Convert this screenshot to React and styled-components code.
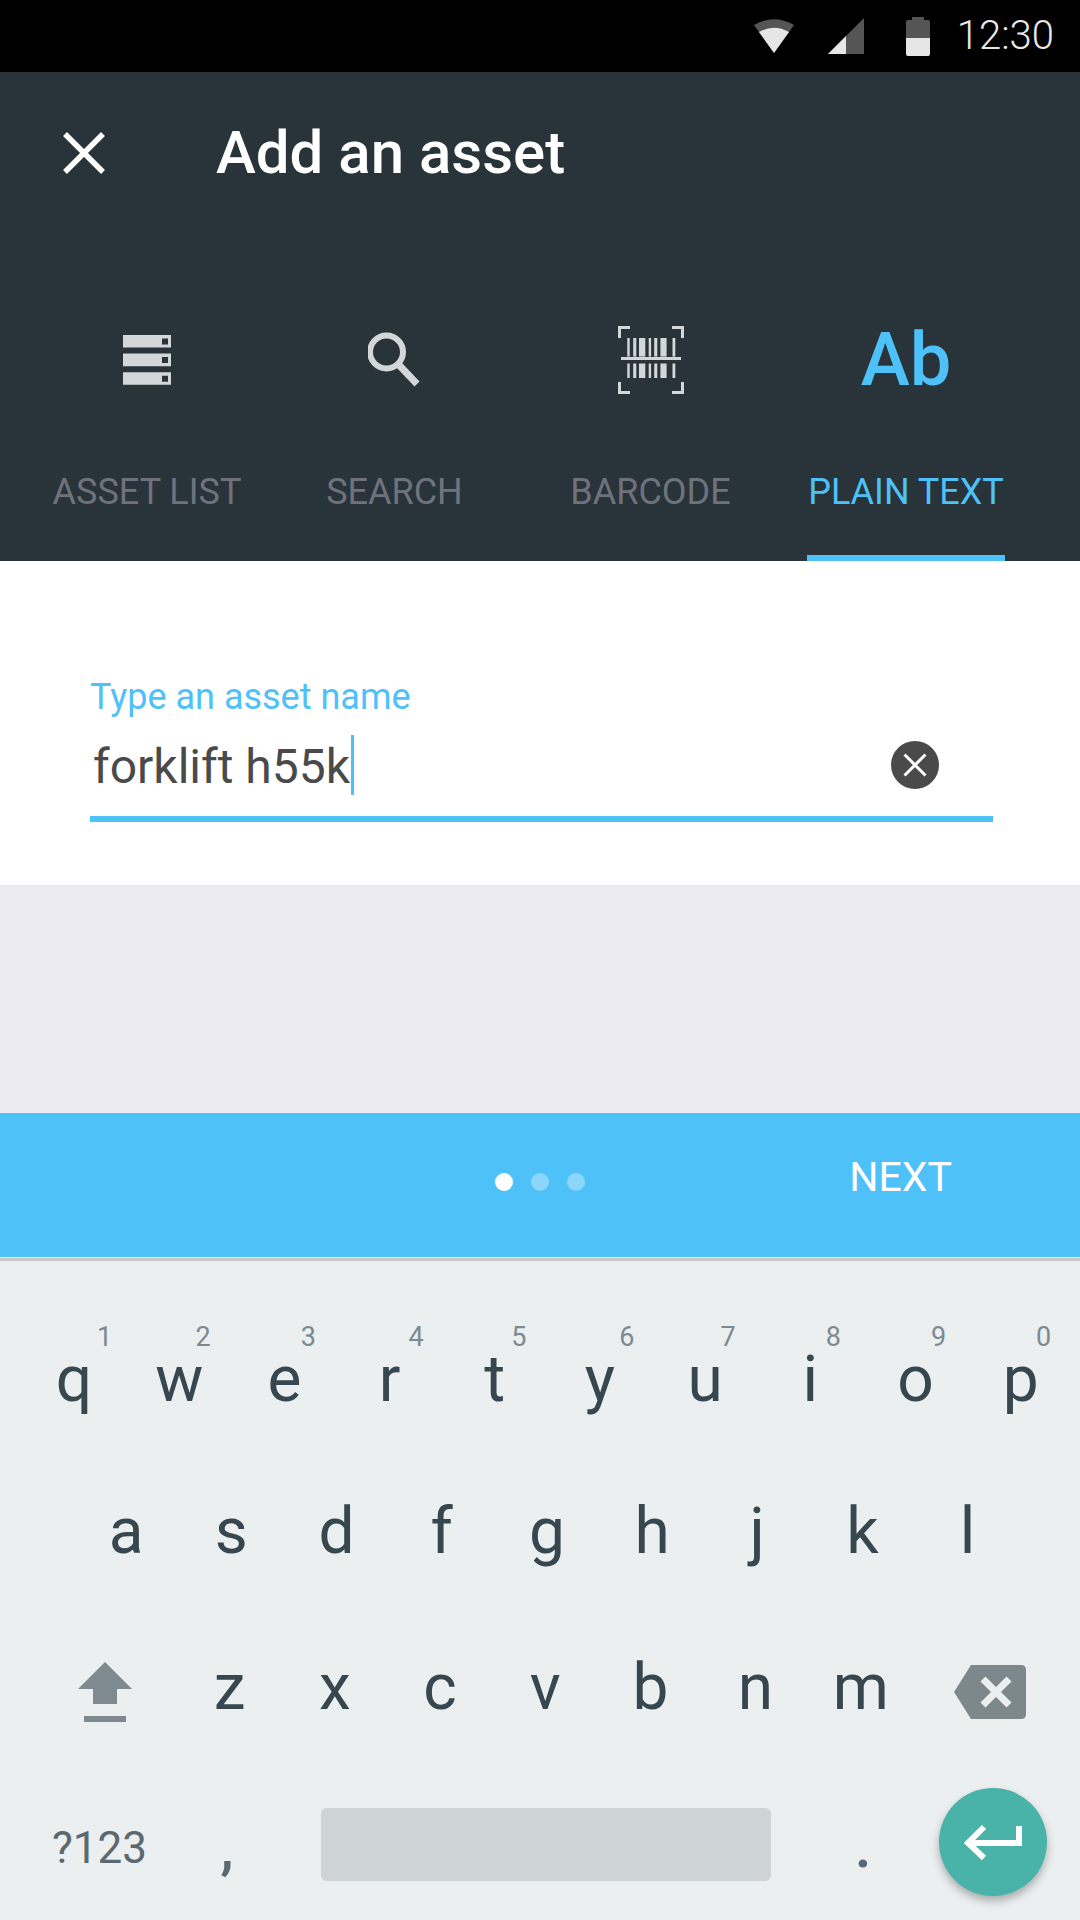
import React from "react";
import styled, { createGlobalStyle } from "styled-components";

const Global = createGlobalStyle`
  html, body { margin: 0; padding: 0; background: #ebeff0; }
  * { box-sizing: border-box; }
`;

const Page = styled.div`
  width: 1080px; height: 1920px; overflow: hidden; display: flex; flex-direction: column;
  font-family: Roboto, "Liberation Sans", sans-serif; background: #ebeff0;
`;
const StatusBar = styled.div`
  height: 72px; background: #000; display: flex; align-items: center; justify-content: flex-end; padding-right: 26px;
`;
const StatusIcon = styled.svg`
  display: block; flex: none; margin-right: ${p => p.$mr}px;
`;
const Clock = styled.span`
  font-size: 40px; font-weight: 300; color: #e8e8e8; line-height: 72px;
`;
const Header = styled.header`
  height: 489px; background: #29333a; display: flex; flex-direction: column;
`;
const TitleRow = styled.div`
  height: 162px; display: flex; align-items: center; padding-left: 62px; gap: 110px;
`;
const Title = styled.h1`
  margin: 0; font-size: 60px; font-weight: 500; color: #fff; line-height: 1;
`;
const Tabs = styled.div`
  flex: 1; display: grid; grid-template-columns: 294px 201px 311px 200px;
`;
const Tab = styled.div`
  display: flex; flex-direction: column; align-items: center;
`;
const IconSlot = styled.div`
  height: 68px; margin-top: 92px; display: flex; align-items: center; justify-content: center;
`;
const AbIcon = styled.span`
  font-size: 74px; font-weight: 500; color: #4fc1f9; line-height: 68px;
`;
const TabLabel = styled.div`
  margin-top: 74px; font-size: 36px; line-height: 48px; white-space: nowrap;
  color: ${p => (p.$active ? "#4fc1f9" : "#6f727d")};
`;
const TabUnderline = styled.div`
  margin-top: auto; width: 198px; height: 6px; background: ${p => (p.$active ? "#4fc1f9" : "transparent")};
`;
const FieldSection = styled.section`
  height: 324px; background: #fff; padding: 116px 87px 0 90px;
`;
const FieldLabel = styled.div`
  font-size: 36px; line-height: 40px; color: #4fc1f9;
`;
const InputRow = styled.div`
  margin-top: 18px; height: 87px; padding: 0 54px 21px 3px; border-bottom: 6px solid #4fc1f9;
  display: flex; align-items: center; justify-content: space-between;
`;
const Value = styled.div`
  font-size: 48px; line-height: 60px; color: #4a4a4a; display: flex; align-items: center;
`;
const ValueText = styled.span`
  padding-top: 3px;
`;
const Caret = styled.span`
  display: block; width: 3px; height: 60px; background: #4fc1f9; margin-left: 1px;
`;
const Spacer = styled.div`
  height: 228px; background: #ebebf1;
`;
const NextBar = styled.div`
  height: 144px; background: #4fc1f9; display: grid; grid-template-columns: 1fr auto 1fr; align-items: center;
`;
const Dots = styled.div`
  grid-column: 2; display: flex; gap: 18px; padding-bottom: 6px;
`;
const Dot = styled.span`
  width: 18px; height: 18px; border-radius: 50%; background: ${p => (p.$on ? "#fff" : "rgba(255,255,255,.35)")};
`;
const NextLabel = styled.span`
  grid-column: 3; justify-self: end; padding: 0 128px 17px 0; font-size: 41px; font-weight: 400; color: #fff; line-height: 48px;
`;
const Keyboard = styled.div`
  flex: 1; position: relative; border-top: 1px solid #fff; display: flex; flex-direction: column;
`;
const KeyboardEdge = styled.div`
  height: 3px; background: #c6c8c8; margin-bottom: 41px;
`;
const KeyRow = styled.div`
  height: 156px; display: flex; padding-left: ${p => p.$pl}px;
`;
const Key = styled.div`
  position: relative; width: 105.2px; flex: none; display: flex; align-items: center; justify-content: center;
  font-size: 64px; color: #37474f; padding-bottom: ${p => p.$pb}px; line-height: 1;
`;
const Hint = styled.span`
  position: absolute; top: 22px; right: ${p => p.$r}px; font-size: 27px; line-height: 1; color: #7d8a90;
`;
const ActionKey = styled.div`
  flex: none; width: ${p => p.$w}px; display: flex; align-items: center; justify-content: center;
`;
const BottomRow = styled.div`
  flex: 1; display: grid; grid-template-columns: 151px 104px 492px 184px; padding-left: 24px;
`;
const SymbolKey = styled.div`
  display: flex; align-items: center; justify-content: center; color: #5b6a72; line-height: 1;
  font-size: ${p => p.$size}px; padding-top: ${p => p.$pt || 0}px; font-weight: ${p => p.$fw || 400};
`;
const SpaceBar = styled.div`
  align-self: start; margin: 38px 0 0 42px; width: 450px; height: 73px; border-radius: 6px; background: #ced3d6;
`;
const Fab = styled.div`
  position: absolute; right: 33px; bottom: 24px; width: 108px; height: 108px; border-radius: 50%;
  background: #4ab3a9; box-shadow: 0 5px 9px rgba(0,0,0,.28); display: flex; align-items: center; justify-content: center;
`;

const grey = "#d3d7d9";
const ListIcon = () => (
  <svg width="48" height="50" viewBox="0 0 48 50">
    {[0, 18.6, 37.2].map(y => (
      <path key={y} fill={grey} fillRule="evenodd" d={`M0 ${y}h48v12.6H0z M39 ${y + 3.5}v6h6v-6z`} />
    ))}
  </svg>
);
const SearchIcon = () => (
  <svg width="54" height="56" viewBox="0 0 54 56" fill="none" stroke={grey}>
    <circle cx="18.5" cy="20" r="16.500" strokeWidth="6" />
    <path d="M31 33L49 52" strokeWidth="7" />
  </svg>
);
const BarcodeIcon = () => {
  const bars = [[9.3, 2.4], [15.2, 3.1], [21, 6.3], [30.7, 2.4], [36.2, 3.1], [42.4, 6.2], [54.5, 2.8]];
  return (
    <svg width="66" height="68" viewBox="0 0 66 68" fill={grey}>
      <path d="M0 12V0h12v3H3v9z M54 0h12v12h-3V3h-9z M0 56h3v9h9v3H0z M66 56v12H54v-3h9v-9z" />
      {bars.map(([x, w]) => (
        <React.Fragment key={x}>
          <rect x={x} y="12" width={w} height="18.6" />
          <rect x={x} y="37.5" width={w} height="14.5" />
        </React.Fragment>
      ))}
      <rect x="3" y="31" width="60" height="3" />
    </svg>
  );
};

const row1 = [["q", 1, 14.5], ["w", 2, 21], ["e", 3, 21], ["r", 4, 18.5], ["t", 5, 21], ["y", 6, 18], ["u", 7, 22], ["i", 8, 22], ["o", 9, 22], ["p", 0, 22]];

export default function App() {
  const tabs = [
    { label: "ASSET LIST", icon: <ListIcon /> },
    { label: "SEARCH", icon: <SearchIcon /> },
    { label: "BARCODE", icon: <BarcodeIcon /> },
    { label: "PLAIN TEXT", icon: <AbIcon>Ab</AbIcon>, active: true },
  ];
  return (
    <Page>
      <Global />
      <StatusBar>
        <StatusIcon $mr={34} width="40" height="36" viewBox="0 0 40 36">
          <path fill="#555" d="M0 7Q20 -4.500 40 7L20 35z" />
          <path fill="#e6e6e6" d="M5 14Q20 5.500 35 14L20 35z" />
        </StatusIcon>
        <StatusIcon $mr={42} width="36" height="36" viewBox="0 0 36 36">
          <path fill="#555" d="M36 0V36H0z" />
          <path fill="#e6e6e6" d="M18 18V36H0z" />
        </StatusIcon>
        <StatusIcon $mr={27} width="24" height="39" viewBox="0 0 24 39">
          <path fill="#555" d="M6 0h12v3h4q2 0 2 2v16H0V5q0-2 2-2h4z" />
          <path fill="#e6e6e6" d="M0 21h24v16q0 2-2 2H2q-2 0-2-2z" />
        </StatusIcon>
        <Clock>12:30</Clock>
      </StatusBar>
      <Header>
        <TitleRow>
          <svg width="44" height="44" viewBox="0 0 44 44" stroke="#fff" strokeWidth="5.500">
            <path d="M3 3L41 41M41 3L3 41" />
          </svg>
          <Title>Add an asset</Title>
        </TitleRow>
        <Tabs>
          {tabs.map(t => (
            <Tab key={t.label}>
              <IconSlot>{t.icon}</IconSlot>
              <TabLabel $active={t.active}>{t.label}</TabLabel>
              <TabUnderline $active={t.active} />
            </Tab>
          ))}
        </Tabs>
      </Header>
      <FieldSection>
        <FieldLabel>Type an asset name</FieldLabel>
        <InputRow>
          <Value><ValueText>forklift h55k</ValueText><Caret /></Value>
          <svg width="48" height="48" viewBox="0 0 48 48">
            <circle cx="24" cy="24" r="24" fill="#4a4a4a" />
            <path d="M13.500 13.500L34.500 34.500M34.500 13.500L13.500 34.500" stroke="#fff" strokeWidth="3" />
          </svg>
        </InputRow>
      </FieldSection>
      <Spacer />
      <NextBar>
        <Dots><Dot $on /><Dot /><Dot /></Dots>
        <NextLabel>NEXT</NextLabel>
      </NextBar>
      <Keyboard>
        <KeyboardEdge />
        <KeyRow $pl={21.4}>
          {row1.map(([k, n, r]) => <Key key={k} $pb={0}>{k}<Hint $r={r}>{n}</Hint></Key>)}
        </KeyRow>
        <KeyRow $pl={73.5}>
          {"asdfghjkl".split("").map(k => <Key key={k} $pb={9}>{k}</Key>)}
        </KeyRow>
        <KeyRow $pl={33}>
          <ActionKey $w={144}>
            <svg width="54" height="60" viewBox="0 0 54 60" fill="#7f8a90">
              <path d="M27 0L54 27H39V42H15V27H0z" />
              <rect x="6" y="54" width="42" height="6" />
            </svg>
          </ActionKey>
          {"zxcvbnm".split("").map(k => <Key key={k} $pb={9}>{k}</Key>)}
          <ActionKey $w={154}>
            <svg width="72" height="54" viewBox="0 0 72 54">
              <path fill="#7d888d" d="M17 0H67q5 0 5 5V49q0 5-5 5H17L0 27z" />
              <path stroke="#ebeff0" strokeWidth="7" d="M29 14L55 40M55 14L29 40" />
            </svg>
          </ActionKey>
        </KeyRow>
        <BottomRow>
          <SymbolKey $size={44} $pt={6}>?123</SymbolKey>
          <SymbolKey $size={60} $fw={500} $pt={6}>,</SymbolKey>
          <SpaceBar />
          <SymbolKey $size={54} $fw={700} $pt={8}>.</SymbolKey>
        </BottomRow>
        <Fab>
          <svg width="58" height="36" viewBox="0 0 58 36" fill="none" stroke="#fff" strokeWidth="6">
            <path d="M55 2V19H5M20 3L4 19L20 34" />
          </svg>
        </Fab>
      </Keyboard>
    </Page>
  );
}
